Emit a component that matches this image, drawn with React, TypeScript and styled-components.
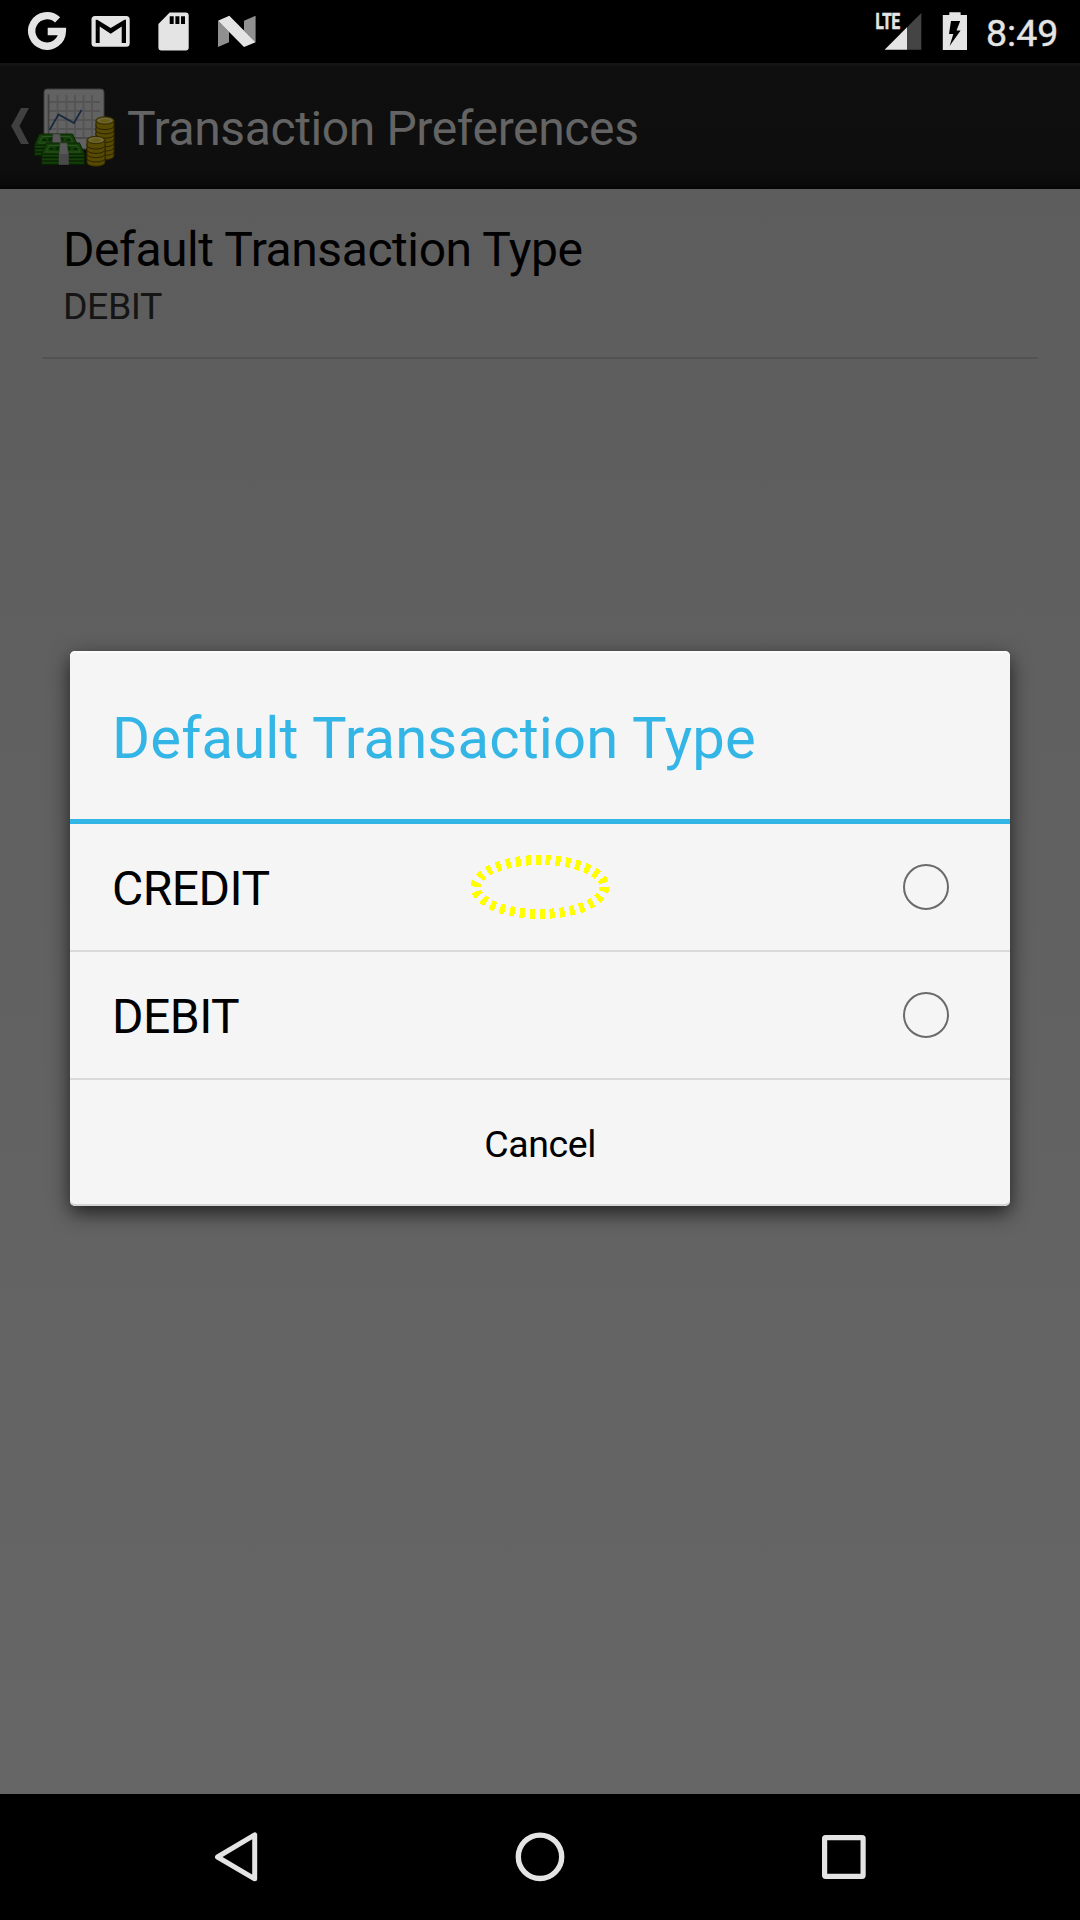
import React from 'react';
import styled, { createGlobalStyle } from 'styled-components';

const GlobalStyle = createGlobalStyle`
  html, body { margin: 0; padding: 0; background: #000; }
  * { box-sizing: border-box; }
`;

const Screen = styled.div`
  position: relative;
  display: flex;
  flex-direction: column;
  width: 1080px;
  height: 1920px;
  overflow: hidden;
  font-family: Roboto, 'Noto Sans', sans-serif;
  background: #000;
`;

const StatusBar = styled.header`
  display: flex;
  justify-content: space-between;
  height: 63px;
  flex: none;
  background: #000;
`;

const StatusGroup = styled.div`
  display: flex;
`;

const Clock = styled.span`
  width: 94px;
  padding-top: 2px;
  font-size: 37.5px;
  font-weight: 400;
  line-height: 63px;
  color: #e4e4e4;
  -webkit-text-stroke: 0.4px #e4e4e4;
`;

const ActionBar = styled.div`
  display: flex;
  height: 126px;
  flex: none;
  background: linear-gradient(#141414 0 3px, #0f0f0f 3px, #0e0e0e 85%, #0a0a0a 96%, #050505 100%);
`;

const BarTitle = styled.h1`
  margin: 0;
  padding-top: 3px;
  font-size: 48px;
  font-weight: 400;
  letter-spacing: -0.38px;
  line-height: 126px;
  color: #646464;
`;

const Content = styled.main`
  flex: 1;
  padding: 0 42px;
  background: linear-gradient(#5d5d5d, #666666);
`;

const Preference = styled.div`
  display: flex;
  flex-direction: column;
  height: 170px;
  padding: 33px 21px 0;
  border-bottom: 2px solid #525252;
`;

const PreferenceTitle = styled.span`
  font-size: 48px;
  letter-spacing: -0.42px;
  line-height: 56px;
  color: #000;
`;

const PreferenceSummary = styled.span`
  font-size: 37.5px;
  letter-spacing: -0.5px;
  line-height: 56px;
  color: #151515;
`;

const NavBar = styled.nav`
  display: flex;
  justify-content: center;
  height: 126px;
  flex: none;
  background: #000;
`;

const DialogLayer = styled.div`
  position: absolute;
  inset: 63px 0 126px;
  display: flex;
  align-items: center;
  justify-content: center;
`;

const Dialog = styled.section`
  display: flex;
  flex-direction: column;
  width: 940px;
  height: 555px;
  border-radius: 5px;
  background: #f5f5f5;
  box-shadow: 0 7px 20px rgba(0, 0, 0, 0.68), inset 0 2px 0 #fcfcfc, inset 0 -2px 0 #d4d4d4;
`;

const DialogTitle = styled.h2`
  margin: 0;
  height: 173px;
  padding: 2px 42px 0;
  border-bottom: 5px solid #33b5e5;
  font-size: 58px;
  font-weight: 400;
  letter-spacing: 0.16px;
  line-height: 170px;
  color: #33b5e5;
`;

const Option = styled.label`
  display: flex;
  align-items: center;
  justify-content: space-between;
  height: 128px;
  padding: 0 61px 0 42px;
  border-bottom: 2px solid #d9d9d9;
`;

const OptionName = styled.span`
  padding-top: 3px;
  font-size: 48px;
  letter-spacing: -0.5px;
  line-height: 56px;
  color: #000;
`;

const Radio = styled.span`
  width: 46px;
  height: 46px;
  border: 2px solid #6a6a6a;
  border-radius: 50%;
`;

const CancelButton = styled.button`
  flex: 1;
  border: 0;
  padding: 1px 0 0;
  background: transparent;
  font-family: inherit;
  font-size: 37.5px;
  letter-spacing: -0.4px;
  color: #000;
`;

const TouchMark = styled.svg`
  position: absolute;
  left: 465px;
  top: 850px;
`;

const NotificationIcons = () => (
  <svg width="280" height="63" viewBox="0 0 280 63" fill="#e4e4e4">
    <path d="M57.600 19.900A15.300 15.300 0 1 0 62.300 31.500H47.700" fill="none" stroke="#e4e4e4" strokeWidth="7.400" />
    <path fillRule="evenodd" d="M95 16h31.200a3.500 3.500 0 0 1 3.500 3.500v23.700a3.500 3.500 0 0 1-3.500 3.500H95a3.500 3.500 0 0 1-3.500-3.500V19.500a3.500 3.500 0 0 1 3.500-3.500zM95.700 19.700V43h4V26.500l11 7.200 11-7.200V43h4.300V19.700h-1.500l-13.800 8.300-13.500-8.300z" />
    <path fillRule="evenodd" d="M169.700 12.500h16a3 3 0 0 1 3 3v32a3 3 0 0 1-3 3h-24.300a3 3 0 0 1-3-3V24zM169.700 16.300v7.700h4v-7.700zm5.700 0v7.700h4v-7.700zm5.600 0v7.700h4v-7.700z" />
    <path fill="#909090" d="M218 20.700l11 11v10.600L218 47zM244 20.700l11.600-5v26.500L244 30.500z" />
    <path d="M218 20.700l11.300-5 26.300 26.500L244 47z" />
  </svg>
);

const LteLabel = styled.text`
  font-family: Roboto, sans-serif;
  font-size: 22px;
  font-weight: 700;
  stroke: #e4e4e4;
  stroke-width: 0.7px;
`;

const SystemIcons = () => (
  <svg width="111" height="63" viewBox="875 0 111 63" fill="#e4e4e4">
    <path fill="#444" d="M907 27.300L921.300 13v36.700H907z" />
    <path d="M907 27.300v22.400h-22.400z" />
    <LteLabel x="875.600" y="29" textLength="24.500" lengthAdjust="spacingAndGlyphs">LTE</LteLabel>
    <path fillRule="evenodd" d="M949.300 12.300h11.300V15h6.400v35h-24.200V15h6.500zM951 21l-2 13h4.300l-3.700 12 11-15.500h-4.100l3.700-9.500z" />
  </svg>
);

const Coin = ({ x, y }: { x: number; y: number }) => (
  <g>
    <path d={`M${x - 9} ${y}v5.500a9 3.600 0 0 0 18 0v-5.500z`} fill="#574a03" stroke="#2a2300" strokeWidth="1" />
    <ellipse cx={x} cy={y} rx="9" ry="3.700" fill="#605208" stroke="#352c00" strokeWidth="1" />
  </g>
);

const CoinStack = ({ x, top, count }: { x: number; top: number; count: number }) => (
  <g>
    {Array.from({ length: count }, (_, i) => (
      <Coin key={i} x={x} y={top + (count - 1 - i) * 4.3} />
    ))}
    <ellipse cx={x} cy={top} rx="7.500" ry="2.800" fill="#6d6846" />
    <ellipse cx={x} cy={top + 0.3} rx="5" ry="1.800" fill="#675d12" />
  </g>
);

const CashBundle = ({ x, y }: { x: number; y: number }) => (
  <g transform={`translate(${x} ${y})`}>
    <path d="M0 11h43v10.500H0z" fill="#0f3406" stroke="#071f02" />
    <path d="M0 14.500h43M0 18h43" stroke="#081f03" strokeWidth="1.200" />
    <path d="M1 12.500h41M1 16.300h41M1 19.800h41" stroke="#18430a" strokeWidth="1" />
    <path d="M5 0h33l5 11H0z" fill="#143f08" stroke="#082503" />
    <path d="M7.500 2.500h28l3 6.500h-34z" fill="none" stroke="#2b5222" strokeWidth="1" />
    <ellipse cx="21.500" cy="5.500" rx="8" ry="3" fill="#0a2b04" />
    <path d="M8 6h4M32 6h4" stroke="#082503" strokeWidth="2" />
    <path d="M18.500 0h7l1.500 11v10.500h-9.500V11z" fill="#585858" stroke="#3c3c3c" strokeWidth=".6" />
    <path d="M17.800 11h9v10.500h-9z" fill="#494949" />
  </g>
);

const HomeIcon = () => (
  <svg width="127" height="126" viewBox="0 63 127 126">
    <path d="M21 108H29l-9.500 18 9.500 18h-8l-9.800-18z" fill="#404040" />
    <rect x="44" y="89" width="60" height="60" rx="3" fill="#626262" stroke="#3c3c3c" />
    <path d="M48 102h52M48 111h52M48 120h52M48 129h52M57.500 95v42M66.500 95v42M75 95v42M83.500 95v42M92 95v42" stroke="#545454" strokeWidth="1.800" />
    <path d="M48.500 94.500V138H100" fill="none" stroke="#414141" strokeWidth="1.700" />
    <path d="M49.500 130l9-15.500 15.500 8.500 7.500-13" fill="none" stroke="#17283f" strokeWidth="1.700" />
    <CoinStack x={105} top={120.5} count={8} />
    <CoinStack x={96} top={140} count={5} />
    <CashBundle x={34.5} y={134} />
    <CashBundle x={41.5} y={143} />
  </svg>
);

const NavIcons = () => (
  <svg width="1080" height="126" viewBox="0 1794 1080 126" fill="none" stroke="#e4e4e4" strokeLinejoin="round">
    <path d="M254.700 1834.800v44L217.500 1857z" strokeWidth="5" />
    <circle cx="540" cy="1856.800" r="21.700" strokeWidth="5.400" />
    <rect x="824.600" y="1837.600" width="38.500" height="38.700" rx="1" strokeWidth="5.200" />
  </svg>
);

const options = ['CREDIT', 'DEBIT'];

export default function App() {
  return (
    <Screen>
      <GlobalStyle />
      <StatusBar>
        <StatusGroup>
          <NotificationIcons />
        </StatusGroup>
        <StatusGroup>
          <SystemIcons />
          <Clock>8:49</Clock>
        </StatusGroup>
      </StatusBar>
      <ActionBar>
        <HomeIcon />
        <BarTitle>Transaction Preferences</BarTitle>
      </ActionBar>
      <Content>
        <Preference>
          <PreferenceTitle>Default Transaction Type</PreferenceTitle>
          <PreferenceSummary>DEBIT</PreferenceSummary>
        </Preference>
      </Content>
      <NavBar>
        <NavIcons />
      </NavBar>
      <DialogLayer>
        <Dialog>
          <DialogTitle>Default Transaction Type</DialogTitle>
          {options.map((name) => (
            <Option key={name}>
              <OptionName>{name}</OptionName>
              <Radio />
            </Option>
          ))}
          <CancelButton>Cancel</CancelButton>
        </Dialog>
      </DialogLayer>
      <TouchMark width="150" height="74" viewBox="465 850 150 74">
        <ellipse
          cx="540"
          cy="887"
          rx="64.500"
          ry="27"
          fill="none"
          stroke="#ffff00"
          strokeWidth="10"
          strokeDasharray="5 5"
          shapeRendering="crispEdges"
        />
      </TouchMark>
    </Screen>
  );
}
